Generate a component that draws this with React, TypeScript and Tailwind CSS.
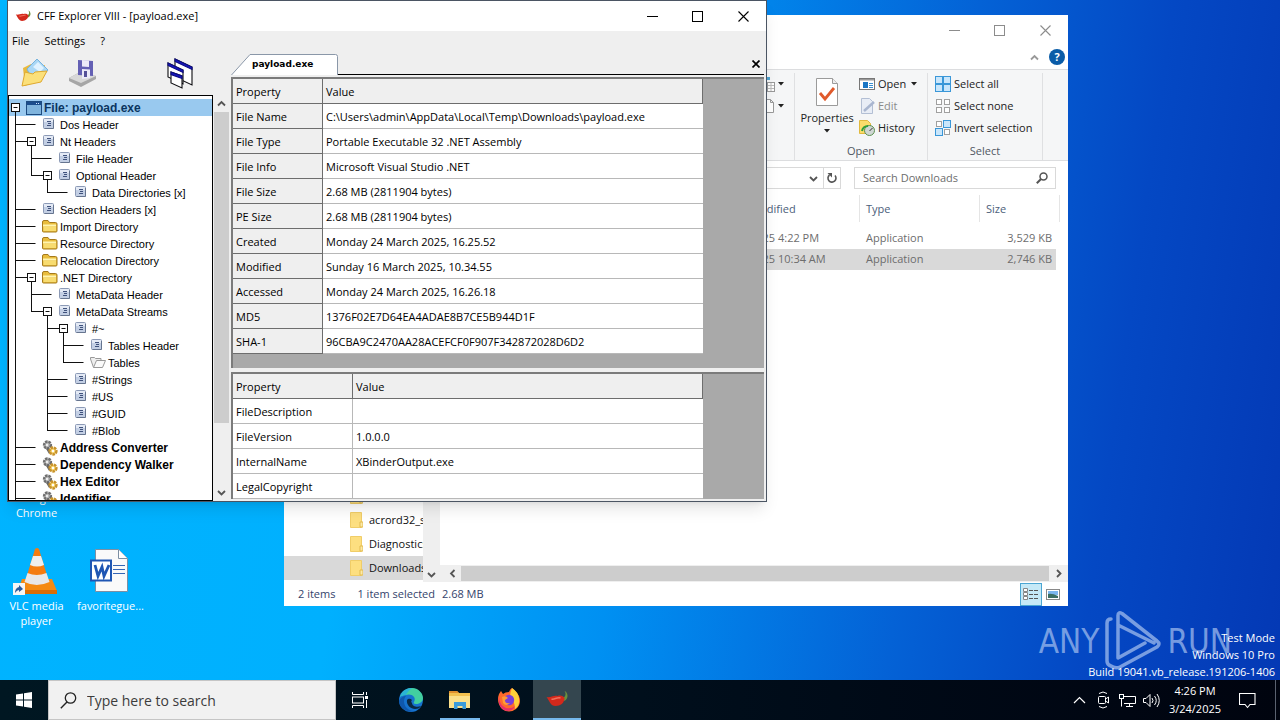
import type { ReactNode } from "react";

const UI = "font-['Open_Sans','Noto_Sans',sans-serif]";

/* ---------- small drawings ---------- */

function Pepper({ className }: { className: string }) {
  return (
    <svg viewBox="0 0 24 20" className={className} aria-hidden="true">
      <path d="M17 9c3-1 4-4 2-7 3 1 5 7 0 10z" fill="#6b8f3c" />
      <path d="M1 8c4 1 7-2 11-1 3-1 6 0 7 2 0 5-4 8-9 8C5 17 4 12 1 8z" fill="#d3291c" />
      <path d="M6 10c3 1 5-2 9-1" stroke="#f0705c" strokeWidth="1.5" fill="none" />
    </svg>
  );
}

function MinIcon() {
  return <svg width="11" height="11"><path d="M0 5.5h11" stroke="currentColor" /></svg>;
}
function MaxIcon() {
  return <svg width="11" height="11"><rect x=".5" y=".5" width="10" height="10" fill="none" stroke="currentColor" /></svg>;
}
function CloseIcon() {
  return <svg width="11" height="11"><path d="M.5.5l10 10M10.500.5l-10 10" stroke="currentColor" strokeWidth="1.1" /></svg>;
}

function Chevron({ dir, className = "text-[#555]" }: { dir: "up" | "down" | "left" | "right"; className?: string }) {
  const d = {
    up: "M1 6.500L4.500 3 8 6.500",
    down: "M1 3l3.500 3.500L8 3",
    left: "M6.500 1L3 4.500 6.500 8",
    right: "M3 1l3.500 3.500L3 8",
  }[dir];
  return (
    <svg width="9" height="9" className={className} aria-hidden="true">
      <path d={d} fill="none" stroke="currentColor" strokeWidth="1.8" />
    </svg>
  );
}

function Caret() {
  return <svg width="6" height="4" aria-hidden="true"><path d="M0 0h6L3 3.500z" fill="#222" /></svg>;
}

function WindowButtons({ tone }: { tone: string }) {
  return (
    <div className={`ml-auto flex self-stretch ${tone}`}>
      <button aria-label="Minimize" className="flex w-[46px] items-center justify-center"><MinIcon /></button>
      <button aria-label="Maximize" className="flex w-[45px] items-center justify-center"><MaxIcon /></button>
      <button aria-label="Close" className="flex w-[46px] items-center justify-center"><CloseIcon /></button>
    </div>
  );
}

/* ---------- tree ---------- */

type Kind = "window" | "page" | "folder" | "openFolder" | "gears";
type Node = { label: string; level: number; kind: Kind; open?: boolean; last?: boolean; rails?: number[] };

const TREE: Node[] = [
  { label: "File: payload.exe", level: 0, kind: "window", open: true },
  { label: "Dos Header", level: 1, kind: "page" },
  { label: "Nt Headers", level: 1, kind: "page", open: true },
  { label: "File Header", level: 2, kind: "page", rails: [1] },
  { label: "Optional Header", level: 2, kind: "page", open: true, last: true, rails: [1] },
  { label: "Data Directories [x]", level: 3, kind: "page", last: true, rails: [1] },
  { label: "Section Headers [x]", level: 1, kind: "page" },
  { label: "Import Directory", level: 1, kind: "folder" },
  { label: "Resource Directory", level: 1, kind: "folder" },
  { label: "Relocation Directory", level: 1, kind: "folder" },
  { label: ".NET Directory", level: 1, kind: "folder", open: true },
  { label: "MetaData Header", level: 2, kind: "page", rails: [1] },
  { label: "MetaData Streams", level: 2, kind: "page", open: true, last: true, rails: [1] },
  { label: "#~", level: 3, kind: "page", open: true, rails: [1] },
  { label: "Tables Header", level: 4, kind: "page", rails: [1, 3] },
  { label: "Tables", level: 4, kind: "openFolder", last: true, rails: [1, 3] },
  { label: "#Strings", level: 3, kind: "page", rails: [1] },
  { label: "#US", level: 3, kind: "page", rails: [1] },
  { label: "#GUID", level: 3, kind: "page", rails: [1] },
  { label: "#Blob", level: 3, kind: "page", last: true, rails: [1] },
  { label: "Address Converter", level: 1, kind: "gears" },
  { label: "Dependency Walker", level: 1, kind: "gears" },
  { label: "Hex Editor", level: 1, kind: "gears" },
  { label: "Identifier", level: 1, kind: "gears" },
];

function Guides({ node }: { node: Node }) {
  const { level, open, last, rails = [] } = node;
  const own = level * 16 - 11.5;
  const box = own + 16;
  return (
    <svg width={level * 16 + 15} height="17" className="shrink-0" aria-hidden="true">
      <g stroke="#111" fill="none">
        {rails.map((r) => <path key={r} d={`M${r * 16 - 11.5} 0v17`} />)}
        {level > 0 && <path d={`M${own} 0v${last ? 9 : 17}M${own} 8.500h${open ? 12 : 20}`} />}
        {open && (
          <>
            <path d={`M${box} 13v4`} />
            <rect x={box - 4} y="4.500" width="8" height="8" fill="#fff" />
            <path d={`M${box - 2} 8.500h4`} />
          </>
        )}
      </g>
    </svg>
  );
}

function TreeIcon({ kind }: { kind: Kind }) {
  if (kind === "window")
    return (
      <svg width="16" height="15" viewBox="0 0 16 15">
        <rect x=".5" y="1.500" width="15" height="13" fill="#7fb4dd" stroke="#1d4b80" />
        <path d="M1 2h14v3H1z" fill="#1b4d8c" />
        <path d="M10 3.500h1M12 3.500h1" stroke="#cfe6ff" />
      </svg>
    );
  if (kind === "page")
    return (
      <svg width="16" height="15" viewBox="0 0 16 15">
        <rect x="1.500" y="1.500" width="10" height="10" rx="1" fill="#c3cfe4" stroke="#8c9ab6" />
        <path d="M2 2h9v3H2z" fill="#e4eaf5" />
        <path d="M2.500 11.500h9V3" stroke="#66758f" fill="none" />
        <path d="M5 4.500h4M6 6.500h3M5 8.500h4" stroke="#40527c" />
      </svg>
    );
  if (kind === "folder")
    return (
      <svg width="16" height="15" viewBox="0 0 16 15">
        <path d="M.5 12V3q0-1.500 1.500-1.500h4l1.500 2h6q1.500 0 1.500 1.500v7q0 1-1 1h-12.500q-1 0-1-1z" fill="#e9bd3d" stroke="#a57a1d" />
        <path d="M1 6.500h13" stroke="#fff4b0" strokeWidth="2" />
        <path d="M1.500 8h12.500v4h-12.500z" fill="#f8dc70" />
      </svg>
    );
  if (kind === "openFolder")
    return (
      <svg width="16" height="15" viewBox="0 0 16 15">
        <path d="M3.500 12.500L.5 4V2.500h4l1 1h5.500v2" fill="#eee" stroke="#999" />
        <path d="M3.500 12.500l3-7h9l-3 7z" fill="#fafafa" stroke="#999" />
      </svg>
    );
  return (
    <svg width="16" height="16" viewBox="0 0 16 16">
      <circle cx="5.500" cy="5" r="3.400" fill="#b5b5b5" stroke="#6f6f6f" strokeWidth="2.500" strokeDasharray="2.500 .8" />
      <path d="M5 8l3 5" stroke="#666" strokeWidth="2.500" />
      <circle cx="11" cy="11" r="3.400" fill="#f6d36a" stroke="#c8932c" strokeWidth="2.500" strokeDasharray="2.500 .8" />
      <circle cx="11" cy="11" r="1.200" fill="#fff" />
      <circle cx="5" cy="5" r="1.200" fill="#eee" />
    </svg>
  );
}

function Tree() {
  return (
    <ul className="min-h-0 w-[205px] overflow-hidden border border-black bg-white pt-[3px] font-['Liberation_Sans',sans-serif] text-[11px] leading-4 text-black">
      {TREE.map((n) => (
        <li
          key={n.label}
          className={`flex h-[17px] items-center pl-[2px] whitespace-nowrap ${
            n.level === 0 ? "bg-[#99c9ef] text-[12px] font-bold text-[#0b3560]" : n.kind === "gears" ? "text-[12px] font-bold" : ""
          }`}
        >
          <Guides node={n} />
          <TreeIcon kind={n.kind} />
          <span className="pt-px pl-[2px]">{n.label}</span>
        </li>
      ))}
    </ul>
  );
}

/* ---------- property grids ---------- */

const FILE_ROWS = [
  ["File Name", "C:\\Users\\admin\\AppData\\Local\\Temp\\Downloads\\payload.exe"],
  ["File Type", "Portable Executable 32 .NET Assembly"],
  ["File Info", "Microsoft Visual Studio .NET"],
  ["File Size", "2.68 MB (2811904 bytes)"],
  ["PE Size", "2.68 MB (2811904 bytes)"],
  ["Created", "Monday 24 March 2025, 16.25.52"],
  ["Modified", "Sunday 16 March 2025, 10.34.55"],
  ["Accessed", "Monday 24 March 2025, 16.26.18"],
  ["MD5", "1376F02E7D64EA4ADAE8B7CE5B944D1F"],
  ["SHA-1", "96CBA9C2470AA28ACEFCF0F907F342872028D6D2"],
];

const VERSION_ROWS = [
  ["FileDescription", ""],
  ["FileVersion", "1.0.0.0"],
  ["InternalName", "XBinderOutput.exe"],
  ["LegalCopyright", ""],
];

function Grid({ rows, keyWidth, shaded }: { rows: string[][]; keyWidth: string; shaded?: boolean }) {
  const head = "h-[25px] border-r border-b border-[#6d6d6d] bg-[#efefef] px-[3px] pt-[2px] text-left font-normal";
  return (
    <table className="w-[470px] table-fixed border-separate border-spacing-0 text-[11px] leading-4 whitespace-nowrap text-black">
      <thead>
        <tr>
          <th className={`${head} ${keyWidth}`}>Property</th>
          <th className={head}>Value</th>
        </tr>
      </thead>
      <tbody>
        {rows.map(([k, v]) => (
          <tr key={k}>
            <th
              scope="row"
              className={
                shaded
                  ? head
                  : "h-[25px] border-r border-b border-[#b8b8b8] bg-white px-[3px] pt-[2px] text-left font-normal"
              }
            >
              {k}
            </th>
            <td className="h-[25px] border-b border-[#b8b8b8] bg-white px-[3px] pt-[2px]">{v}</td>
          </tr>
        ))}
      </tbody>
    </table>
  );
}

/* ---------- CFF Explorer window ---------- */

function CffWindow() {
  return (
    <section className="absolute top-0 left-[7px] z-10 flex h-[502px] w-[760px] flex-col border border-[#4b5563] bg-[#efefef] text-black shadow-lg">
      <header className="flex h-[30px] shrink-0 items-center bg-white pl-[7px]">
        <Pepper className="h-[14px] w-[17px]" />
        <h1 className="pl-[5px] text-[11px]">CFF Explorer VIII - [payload.exe]</h1>
        <WindowButtons tone="text-black" />
      </header>
      <div className="flex min-h-0 flex-1">
        <div className="flex w-[223px] shrink-0 flex-col">
          <nav className="flex h-[20px] items-center gap-[15px] pl-[4px] text-[11px]">
            <button>File</button>
            <button>Settings</button>
            <button>?</button>
          </nav>
          <div className="flex h-[44px] shrink-0 items-center pl-[12px]">
            <button aria-label="Open">
              <svg width="30" height="30" viewBox="0 0 30 30">
                <path d="M3 10l8-4 3 3 11-2-3 14-17 7z" fill="#e8b93e" />
                <path d="M7 11L17 1l11 11-8 9-9-2z" fill="#a9d7f5" stroke="#76b3dd" />
                <path d="M13 9l5-5 6 6-4 4z" fill="#dff2ff" />
                <path d="M2 28l3-14 8 2 2-2 12-1-6 11z" fill="#fbe07a" stroke="#dfa92e" />
              </svg>
            </button>
            <button aria-label="Save" className="ml-[18px]">
              <svg width="30" height="30" viewBox="0 0 30 30">
                <path d="M1 20l11-6 16 4v3L13 29 1 23z" fill="#a6a6a6" />
                <path d="M1 20l11-6 16 4-15 7z" fill="#d8d8d8" />
                <path d="M10 2l15 1v15l-15-1z" fill="#6460b4" />
                <path d="M14 2l7 .5V9l-7-.5z" fill="#eceaf8" />
                <path d="M14 11l8 .5V20l-8 1z" fill="#eceaf8" />
                <path d="M16 13h3v6h-3z" fill="#555098" />
              </svg>
            </button>
            <button aria-label="Cascade windows" className="ml-[67px]">
              <svg width="30" height="32" viewBox="0 0 30 32" stroke="#0b0b10" strokeWidth="1.100">
                <path d="M10 2l17 8v18l-17-8z" fill="#fff" />
                <path d="M10 2l17 8v2.500L10 4.500z" fill="#1717c0" stroke="#0d0d80" />
                <path d="M3 6l15 7v14L3 20z" fill="#fff" />
                <path d="M3 6l15 7v2.500L3 8.500z" fill="#1717c0" stroke="#0d0d80" />
                <path d="M6 15l11 4v12L6 26z" fill="#fff" />
                <path d="M6 15l11 4v2.500l-11-4z" fill="#1717c0" stroke="#0d0d80" />
              </svg>
            </button>
          </div>
          <div className="flex min-h-0 flex-1">
            <Tree />
            <div className="flex w-[17px] flex-col items-center bg-[#efefef]">
              <div className="flex h-[17px] items-center"><Chevron dir="up" /></div>
              <div className="h-[311px] w-[15px] bg-[#cdcdcd]" />
              <div className="mt-auto flex h-[17px] items-center"><Chevron dir="down" /></div>
            </div>
          </div>
        </div>
        <main className="flex min-w-0 flex-1 flex-col pt-[23px] pr-[2px]">
          <div className="flex h-[21px] items-end">
            <div className="relative h-[21px] w-[107px]">
              <svg className="absolute inset-0" width="107" height="21">
                <path d="M.5 21L19 .5h85.500q2 0 2 2V21" fill="#fff" stroke="#8a97a8" />
              </svg>
              <button className="relative flex h-[21px] items-center pl-[21px] font-['DejaVu_Sans',sans-serif] text-[9px] font-bold">payload.exe</button>
            </div>
            <div className="flex h-[21px] flex-1 justify-end border-b border-black pr-[4px]">
              <button aria-label="Close tab">
                <svg width="8" height="8"><path d="M.5.5l7 7M7.500.5l-7 7" stroke="#000" strokeWidth="1.700" /></svg>
              </button>
            </div>
          </div>
          <div className="mt-[2px] h-[291px] shrink-0 overflow-hidden border-t-2 border-l-2 border-[#7b7b7b] bg-[#a9a9a9]">
            <Grid rows={FILE_ROWS} keyWidth="w-[90px]" shaded />
          </div>
          <div className="mt-[4px] h-[127px] shrink-0 overflow-hidden border-t-2 border-l-2 border-[#7b7b7b] bg-[#a9a9a9]">
            <Grid rows={VERSION_ROWS} keyWidth="w-[120px]" />
          </div>
        </main>
      </div>
    </section>
  );
}

/* ---------- File Explorer window ---------- */

function FolderGlyph() {
  return (
    <svg width="13" height="16" viewBox="0 0 13 16" className="shrink-0" aria-hidden="true">
      <path d="M.5.5h11v15H.5z" fill="#fddf80" stroke="#f0cd68" />
      <path d="M10 10h3v5h-3z" fill="#fbe9a8" stroke="#e3bb4f" />
    </svg>
  );
}

function Squares({ fill }: { fill: [boolean, boolean, boolean, boolean] }) {
  return (
    <svg width="16" height="16" aria-hidden="true">
      {fill.map((on, i) => {
        const x = (i % 2) * 8 + (on ? 0.5 : 1.5);
        const y = Math.floor(i / 2) * 8 + (on ? 0.5 : 1.5);
        const s = on ? 7 : 5;
        return <rect key={i} x={x} y={y} width={s} height={s} fill={on ? "#c9e6fb" : "#fff"} stroke={on ? "#3a97d8" : "#a0a0a0"} />;
      })}
    </svg>
  );
}

function RibbonItem({ icon, children, muted }: { icon: ReactNode; children: ReactNode; muted?: boolean }) {
  return (
    <button className={`flex h-[22px] items-center gap-[3px] ${muted ? "text-[#8b8b8b]" : "text-[#222]"}`}>
      {icon}
      {children}
    </button>
  );
}

function ExplorerWindow() {
  const files = [
    ["3/24/2025 4:22 PM", "Application", "3,529 KB"],
    ["3/16/2025 10:34 AM", "Application", "2,746 KB"],
  ];
  return (
    <section className="absolute top-[15px] left-[284px] flex h-[591px] w-[784px] flex-col bg-white text-[11px] whitespace-nowrap">
      <header className="flex h-[30px] shrink-0"><WindowButtons tone="text-[#8c8c8c]" /></header>
      <div className="flex h-[24px] shrink-0 items-center justify-end gap-[10px] pr-[3px]">
        <Chevron dir="up" className="text-[#999]" />
        <button aria-label="Help" className="h-[16px] w-[16px] rounded-full bg-[#0a5ca8] text-[11px] leading-4 font-bold text-white">?</button>
      </div>

      <div className="flex h-[92px] shrink-0 justify-end border-y border-[#dcdddf] bg-[#f5f6f7] pr-[25px] pt-[3px]">
        <div className="flex w-[36px] flex-col border-r border-[#dfe0e2]">
          <button aria-label="New item" className="flex h-[22px] items-center gap-[3px]">
            <svg width="16" height="16">
              <path d="M3 1h8v3H3z" fill="#4ea3cf" /><path d="M6 4v4h4" stroke="#999" fill="none" />
              <rect x="8.500" y="6.500" width="7" height="9" fill="#fff" stroke="#999" /><path d="M9 9.500h6M9 12.500h6M12 7v8" stroke="#bbb" />
            </svg>
            <Caret />
          </button>
          <button aria-label="Easy access" className="flex h-[22px] items-center gap-[3px]">
            <svg width="16" height="16"><path d="M3.500 1.500h8l3 3v10h-11zM11.500 1.500v3h3" fill="#fff" stroke="#999" /></svg>
            <Caret />
          </button>
        </div>
        <div className="flex w-[133px] flex-col border-r border-[#dfe0e2]">
          <div className="flex gap-[6px] pl-[6px]">
            <button className="flex w-[52px] flex-col items-center pt-[4px] text-[#222]">
              <svg width="22" height="30" viewBox="0 0 22 30">
                <path d="M.5 1.500h16l5 5v22H.5z" fill="#fff" stroke="#9b9b9b" />
                <path d="M16.500 1.500v5h5" fill="#eee" stroke="#9b9b9b" />
                <path d="M4 16l5 6 9-11" fill="none" stroke="#e05a2b" strokeWidth="2.800" />
              </svg>
              <span className="pt-[3px] leading-4">Properties</span>
              <span className="pt-[3px]"><Caret /></span>
            </button>
            <div>
              <RibbonItem
                icon={
                  <svg width="16" height="12"><rect x=".5" y=".5" width="15" height="11" fill="#fff" stroke="#777" /><path d="M1 1h14v1.500H1z" fill="#999" /><path d="M4 4h5v6H4z" fill="#1976c5" /><path d="M10 5.500h4M10 7.500h4M10 9.500h4" stroke="#3a8fd0" /></svg>
                }
              >
                Open <span className="pl-[2px]"><Caret /></span>
              </RibbonItem>
              <RibbonItem
                muted
                icon={
                  <svg width="16" height="16"><path d="M2.500.5h8l3 3v12h-11z" fill="#e8edf6" stroke="#b3bfd4" /><path d="M5 13L15 4" stroke="#a9b6d0" strokeWidth="2.500" /></svg>
                }
              >
                Edit
              </RibbonItem>
              <RibbonItem
                icon={
                  <svg width="16" height="16"><path d="M.5.5h8l3 3v10H.5z" fill="#fbdc6b" stroke="#e0b93e" /><circle cx="10.500" cy="10.500" r="5" fill="#cfd6d4" stroke="#5b8f50" /><path d="M3 11a6 6 0 0 1 6-5" stroke="#2f9e3c" strokeWidth="2" fill="none" /><path d="M10.500 11l3-3" stroke="#333" /></svg>
                }
              >
                History
              </RibbonItem>
            </div>
          </div>
          <span className="mt-auto pb-[1px] text-center leading-4 text-[#505762]">Open</span>
        </div>
        <div className="flex w-[115px] flex-col border-r border-[#dfe0e2] pl-[7px]">
          <RibbonItem icon={<Squares fill={[true, true, true, true]} />}>Select all</RibbonItem>
          <RibbonItem icon={<Squares fill={[false, false, false, false]} />}>Select none</RibbonItem>
          <RibbonItem icon={<Squares fill={[false, true, true, false]} />}>Invert selection</RibbonItem>
          <span className="mt-auto mr-[7px] pb-[1px] text-center leading-4 text-[#505762]">Select</span>
        </div>
      </div>

      <div className="flex h-[34px] shrink-0 items-center gap-[13px] pr-[12px] pl-[100px]">
        <div className="flex h-[22px] flex-1 items-center justify-end border border-[#d9d9d9]">
          <button aria-label="Previous locations" className="flex w-[14px] justify-start"><Chevron dir="down" /></button>
          <button aria-label="Refresh" className="flex h-full w-[17px] items-center justify-center border-l border-[#d9d9d9]">
            <svg width="12" height="12"><path d="M3.500 3A4 4 0 1 0 9 3.500" fill="none" stroke="#555" strokeWidth="1.600" /><path d="M1.500 1h4.500v4.500z" fill="#555" /></svg>
          </button>
        </div>
        <label className="flex h-[22px] w-[202px] items-center border border-[#d9d9d9] pr-[7px] pl-[8px]">
          <input aria-label="Search Downloads" placeholder="Search Downloads" className="min-w-0 flex-1 outline-none placeholder:text-[#6d6d6d]" />
          <svg width="12" height="12"><circle cx="7.500" cy="4.500" r="3.500" fill="none" stroke="#555" strokeWidth="1.500" /><path d="M5 7L.8 11.200" stroke="#555" strokeWidth="2" /></svg>
        </label>
      </div>

      <div className="flex min-h-0 flex-1">
        <aside className="flex w-[156px] shrink-0">
          <ul className="flex min-w-0 flex-1 flex-col justify-end overflow-hidden pb-[2px] text-[#111]">
            {["acrord32_sbx", "acrord32_super_sbx", "Diagnostics", "Downloads"].map((f, i) => (
              <li key={f} className={`flex h-[24px] shrink-0 items-center gap-[6px] pl-[66px] ${i === 3 ? "bg-[#d9d9d9]" : ""}`}>
                <FolderGlyph />
                {f}
              </li>
            ))}
          </ul>
          <div className="flex w-[17px] flex-col items-center justify-end bg-[#efefef] pb-[3px]"><Chevron dir="down" /></div>
        </aside>
        <div className="flex min-w-0 flex-1 flex-col">
          <table className="ml-[274px] w-[346px] table-fixed border-separate border-spacing-0">
            <thead>
              <tr className="text-left text-[#4c607a]">
                <th className="h-[27px] w-[146px] border-r border-[#e5e5e5] pt-[2px] pl-[9px] font-normal">Date modified</th>
                <th className="w-[120px] border-r border-[#e5e5e5] pt-[2px] pl-[6px] font-normal">Type</th>
                <th className="border-r border-[#e5e5e5] pt-[2px] pl-[6px] font-normal">Size</th>
              </tr>
            </thead>
          </table>
          <table className="mt-[6px] ml-[274px] w-[342px] table-fixed border-separate border-spacing-0 text-[#6d6d6d]">
            <tbody>
              {files.map(([date, type, size], i) => (
                <tr key={date} className={i === 1 ? "bg-[#d9d9d9]" : ""}>
                  <td className="h-[21px] w-[146px] pl-[9px]">{date}</td>
                  <td className="w-[120px] pl-[6px]">{type}</td>
                  <td className="pr-[4px] text-right">{size}</td>
                </tr>
              ))}
            </tbody>
          </table>
          <div className="mt-auto flex h-[17px] items-center bg-[#efefef] pl-[4px]">
            <span className="flex w-[17px] justify-center"><Chevron dir="left" /></span>
            <div className="h-[15px] flex-1 bg-[#cdcdcd]" />
            <span className="flex w-[19px] justify-center"><Chevron dir="right" /></span>
          </div>
        </div>
      </div>

      <footer className="flex h-[24px] shrink-0 items-center pr-[8px] pl-[14px] text-[#34436b]">
        <span>2 items</span>
        <span className="pl-[22px]">1 item selected</span>
        <span className="pl-[7px]">2.68 MB</span>
        <button aria-label="Details view" className="ml-auto flex h-[23px] w-[22px] items-center justify-center border border-[#4ba6d3] bg-[#c5e9f7]">
          <svg width="16" height="13"><path d="M.5.5h4v3h-4zM.5 4.500h4v3h-4zM.5 8.500h4v3h-4z" fill="#fff" stroke="#888" /><path d="M6 2.500h4M11 2.500h4M6 6.500h4M11 6.500h4M6 10.500h4M11 10.500h4" stroke="#555" /></svg>
        </button>
        <button aria-label="Large icons view" className="ml-[4px]">
          <svg width="14" height="11"><rect x=".5" y=".5" width="13" height="10" fill="#fff" stroke="#888" /><path d="M2 2h10v4H2z" fill="#7cb6ee" /><path d="M2 5q4-1 10 2v2H2z" fill="#3b6e63" /></svg>
        </button>
      </footer>
    </section>
  );
}

/* ---------- desktop ---------- */

function DesktopIcons() {
  return (
    <div className="absolute top-[547px] left-0 flex text-[11px] leading-[15px] text-white [text-shadow:0_1px_2px_rgba(0,40,90,.6)]">
      <button className="flex w-[73px] flex-col items-center">
        <svg width="56" height="48" viewBox="0 0 56 48">
          <path d="M13 32h30l5 12-1 2H8z" fill="#f58a12" />
          <path d="M9 43h39v4H9z" fill="#d96c05" />
          <path d="M26 2q2-2 4 0l10 33q-12 6-24 0z" fill="#f47c10" />
          <path d="M24 9h8l3 9q-7 3-14 0z" fill="#eee" />
          <path d="M18.500 26q9 4 19 0l3 9q-13 6-25 0z" fill="#e8e8e8" />
          <rect x="4" y="36" width="12" height="12" fill="#f5f5f5" />
          <path d="M6 46q0-5 4-6V38l4 4-4 3v-2q-2 0-4 3z" fill="#2b5a9b" />
        </svg>
        <span className="mt-[3px] w-[62px]">VLC media player</span>
      </button>
      <button className="flex w-[75px] flex-col items-center">
        <svg width="44" height="48" viewBox="0 0 44 48">
          <path d="M6.500 2.500h23l9 9v33h-32z" fill="#fafafa" stroke="#7d8fa3" />
          <path d="M29.500 2.500v9h9" fill="#fff" stroke="#7d8fa3" />
          <path d="M24 18.500h12M24 22.500h12M24 26.500h12" stroke="#3566b5" />
          <rect x="2" y="13.500" width="20" height="20" fill="#fff" stroke="#1f56b3" strokeWidth="2" />
          <path d="M6 18l3 11 4-9 2 9 5-11" fill="none" stroke="#1f56b3" strokeWidth="2.800" />
        </svg>
        <span className="mt-[3px]">favoritegue...</span>
      </button>
    </div>
  );
}

function Watermark() {
  return (
    <div className="absolute right-[48px] bottom-[9px] flex items-center gap-[6px] font-['Liberation_Sans_Narrow','DejaVu_Sans_Condensed','Liberation_Sans',sans-serif] text-[33px] leading-none text-[#a9c3f0]/70">
      <span>ANY</span>
      <svg width="56" height="60" viewBox="0 0 56 60" fill="none" stroke="currentColor" strokeWidth="3.500" strokeLinejoin="round" strokeLinecap="round">
        <path d="M6 8Q2 8 2 12v38q0 4 4 5 4 3 9 1l37-20q4-3 0-6L17 2.500q-4-2-4 2V47l27-15M13 14l36 18" />
      </svg>
      <span>RUN</span>
    </div>
  );
}

/* ---------- taskbar ---------- */

function Taskbar() {
  const app = "flex h-full w-12 items-center justify-center";
  return (
    <footer className="z-20 flex h-10 items-stretch bg-gradient-to-r from-[#001722] via-[#000f1c] to-[#00040f] text-white">
      <button aria-label="Start" className={app}>
        <svg width="16" height="16"><path d="M0 2.500l7-1V7.500H0zM8 1.300L16 0v7.500H8zM0 8.500h7v6l-7-1zM8 8.500h8V16l-8-1.300z" fill="#fff" /></svg>
      </button>
      <label className="flex w-[288px] items-center gap-[10px] border border-[#c5c5c5] bg-[#f1f1f1] pl-[11px]">
        <svg width="17" height="17"><circle cx="10.500" cy="6" r="5.200" fill="none" stroke="#222" strokeWidth="1.300" /><path d="M7 10L.8 16.200" stroke="#222" strokeWidth="1.400" /></svg>
        <input aria-label="Type here to search" placeholder="Type here to search" className="min-w-0 flex-1 text-[14px] outline-none placeholder:text-[#3c3c3c]" />
      </label>
      <button aria-label="Task view" className={app}>
        <svg width="17" height="16" fill="none" stroke="#fff"><path d="M.5 0v2.500h11V0M.5 16v-2.500h11V16M14.500 0v3M14.500 8v8" /><rect x=".5" y="5" width="11" height="6" /><path d="M13 5.500h3" strokeWidth="3" /></svg>
      </button>
      <button aria-label="Edge" className={`${app} ml-[3px]`}>
        <svg width="24" height="24" viewBox="0 0 24 24">
          <circle cx="12" cy="12" r="12" fill="#1673cf" />
          <path d="M1 9C3 2 9 0 13 0c6 0 11 5 11 10 0 4-4 6-7 6-2 0-3-1-2-2 3-5-3-9-8-7-3 0-5 1-6 2z" fill="#42cfa0" />
          <path d="M1 9C3 2 9 0 13 0c-3 2-5 5-6 7-3 0-5 1-6 2z" fill="#2ab4d4" />
          <path d="M8 12c-1 5 4 9 8 9 3 0 5-1 6-3-4 2-9 0-9-3-1-1-1-2 0-3-2-2-4-1-5 0z" fill="#0a2942" />
          <path d="M7 8c-5 6 0 15 8 15-7 2-15-3-15-10 1-3 4-5 7-5z" fill="#0f58ad" />
        </svg>
      </button>
      <button aria-label="File Explorer" className="ml-[1px] flex w-12 flex-col items-center">
        <span className="flex flex-1 items-center pt-[2px]">
          <svg width="22" height="20"><path d="M0 1h8l2 2h11v15H0z" fill="#f3c14f" /><path d="M0 1h8l2 2H0z" fill="#e08f2c" /><path d="M0 6h21v12H0z" fill="#fce08a" /><path d="M5 19v-7h12v7h-3.500v-3h-5v3z" fill="#3c9bd9" /></svg>
        </span>
        <span className="h-[2px] w-10 bg-[#76b9ed]" />
      </button>
      <button aria-label="Firefox" className={`${app} ml-[1px]`}>
        <svg width="24" height="24" viewBox="0 0 24 24">
          <path d="M2 6l2-3 2 3q2-2 6-2 1-3 3-4 5 4 7 8 3 8-3 13-7 5-14 0Q-1 14 2 6z" fill="#ff6a2b" />
          <path d="M15 0q6 4 7 10 1 8-4 11 0-8-5-12 0-5 2-9z" fill="#ffcf3a" />
          <path d="M2 8q0 9 7 12 6 1 9-2-2 5-8 5Q0 21 2 8z" fill="#e8306b" />
          <circle cx="12" cy="12" r="5.200" fill="#7a3fd8" />
          <path d="M5 9q4-2 6 1l-3 2q0 4 5 3-4 4-7 0z" fill="#ff9c35" />
        </svg>
      </button>
      <button aria-label="CFF Explorer" className="flex w-12 flex-col items-center bg-[#34464f]">
        <span className="flex flex-1 items-center"><Pepper className="h-[20px] w-[25px]" /></span>
        <span className="h-[2px] w-12 bg-[#76b9ed]" />
      </button>

      <div className="ml-auto flex items-center">
        <button aria-label="Hidden icons" className="flex w-6 justify-center">
          <svg width="13" height="8"><path d="M1 7l5.500-5.500L12 7" fill="none" stroke="#fff" strokeWidth="1.200" /></svg>
        </button>
        <button aria-label="Meet now" className="flex w-6 justify-center">
          <svg width="13" height="18" fill="none" stroke="#fff"><rect x="1.500" y="5.500" width="7" height="7" rx="1" /><path d="M8.500 8l3-2v6l-3-2M2 2.500q4-3 8 0M2 15.500q4 3 8 0" /></svg>
        </button>
        <button aria-label="Network" className="flex w-6 justify-center">
          <svg width="17" height="15" fill="none" stroke="#fff"><path d="M5 3.500h11.500v7H5M10.500 10.500v3M7 13.500h7M2.500 5v8.500" /><rect x=".5" y="1.500" width="4" height="4" fill="#000f1c" /></svg>
        </button>
        <button aria-label="Volume" className="flex w-6 justify-center">
          <svg width="17" height="15" fill="none" stroke="#fff"><path d="M.5 5.500h2.500l4-4v12l-4-4H.5zM9 5q2 2.500 0 5M11.500 3q3.500 4.500 0 9M14 1q4.500 6.500 0 13" /></svg>
        </button>
        <div className="w-[64px] text-center text-[11px] leading-[18px]">
          <div>4:26 PM</div>
          <div>3/24/2025</div>
        </div>
        <button aria-label="Notifications" className="flex w-[40px] justify-center">
          <svg width="17" height="17" fill="none" stroke="#fff" strokeWidth="1.100"><path d="M.5 1.500h15.500v11h-5l-2.500 3-2.500-3H.5z" /></svg>
        </button>
        <span className="ml-[8px] h-10 w-[5px] border-l border-[#5a6270]" />
      </div>
    </footer>
  );
}

export default function App() {
  return (
    <div className={`relative flex min-h-screen flex-col overflow-hidden bg-[linear-gradient(98deg,#00b4ff_0%,#00b0fe_30%,#0090f2_50%,#0462d6_71%,#0448c4_85%,#0438b4_100%)] ${UI}`}>
      <div className="relative flex-1">
        <p className="absolute top-[490px] left-0 w-[73px] text-center text-[11px] leading-[15px] text-white">
          Google Chrome
        </p>
        <ExplorerWindow />
        <CffWindow />
        <DesktopIcons />
        <Watermark />
        <p className="absolute right-[5px] bottom-0 text-right text-[11px] leading-[17px] text-white">
          Test Mode<br />Windows 10 Pro<br />Build 19041.vb_release.191206-1406
        </p>
      </div>
      <Taskbar />
    </div>
  );
}
